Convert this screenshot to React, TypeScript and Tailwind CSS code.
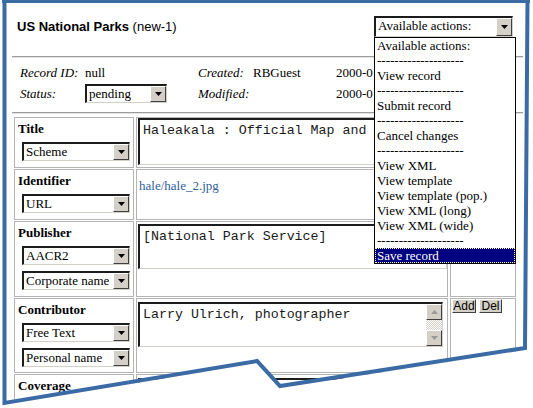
import React from "react"

const serif = "font-['Liberation_Serif','Times_New_Roman',serif]"
const sunken =
  "border-t-2 border-l-2 border-b border-r border-t-[#1c1c1c] border-l-[#1c1c1c] border-b-[#d4d0c8] border-r-[#d4d0c8]"
const raised =
  "border border-t-white border-l-white border-b-[#404040] border-r-[#404040] bg-[#d4d0c8]"

const Tri = ({ up, color = "black" }: { up?: boolean; color?: string }) => (
  <svg width="7" height="4" viewBox="0 0 7 4">
    <path d={up ? "M3.5 0L7 4H0z" : "M0 0h7L3.5 4z"} fill={color} />
  </svg>
)

const Select = ({ label, className = "" }: { label: string; className?: string }) => (
  <div className={`flex h-[19px] items-stretch bg-white ${sunken} ${className}`}>
    <span className={`flex-1 truncate pl-[2px] text-[13px] leading-[15px] text-black ${serif}`}>
      {label}
    </span>
    <span className={`flex w-[16px] items-center justify-center ${raised}`}>
      <Tri />
    </span>
  </div>
)

const TextBox = ({
  text,
  className = "",
  scroll,
}: {
  text: string
  className?: string
  scroll?: boolean
}) => (
  <div className={`flex bg-white ${sunken} ${className}`}>
    <div className="flex-1 overflow-hidden whitespace-pre px-[3px] pt-[3px] font-['Liberation_Mono',monospace] text-[13.3px] leading-[15px] text-[#1a1a1a]">
      {text}
    </div>
    {scroll && (
      <div className="flex w-[16px] flex-col">
        <span className={`flex h-[16px] items-center justify-center ${raised}`}>
          <Tri up color="#9a9a9a" />
        </span>
        <span className="flex-1 bg-[repeating-conic-gradient(#d4d0c8_0_25%,#ffffff_0_50%)] bg-[length:2px_2px]" />
        <span className={`flex h-[16px] items-center justify-center ${raised}`}>
          <Tri color="#9a9a9a" />
        </span>
      </div>
    )}
  </div>
)

const Label = ({ children }: { children: React.ReactNode }) => (
  <div className={`pl-[3px] text-[13px] font-bold leading-[16px] text-black ${serif}`}>{children}</div>
)

const Cell = ({ className = "", children }: { className?: string; children?: React.ReactNode }) => (
  <div className={`border border-[#b4b4b4] ${className}`}>{children}</div>
)

const actions = [
  "Available actions:",
  "--------------------",
  "View record",
  "--------------------",
  "Submit record",
  "--------------------",
  "Cancel changes",
  "--------------------",
  "View XML",
  "View template",
  "View template (pop.)",
  "View XML (long)",
  "View XML (wide)",
  "--------------------",
]

const App = () => {
  return (
    <div className="relative h-[408px] w-[533px] overflow-hidden bg-white">
      <div className="pl-[12px] pr-[10px]">
        <div className="flex h-[56px] items-start justify-between pt-[16px]">
          <div className="mt-[3px] pl-[5px] font-['Liberation_Sans',Arial,sans-serif] text-[13px] leading-[16px] text-black">
            <b>US National Parks</b> (new-1)
          </div>
          <Select label="Available actions:" className="mr-[10px] h-[21px] w-[139px]" />
        </div>
        <div className="h-[2px] border-t border-b border-t-[#9c9c9c] border-b-[#e4e4e4]" />

        <div className={`mt-[4px] pl-[8px] text-[13px] text-black ${serif}`}>
          <div className="flex h-[21px] items-center">
            <span className="w-[65px] italic">Record ID:</span>
            <span className="w-[113px]">null</span>
            <span className="w-[55px] italic">Created:</span>
            <span className="w-[83px]">RBGuest</span>
            <span className="w-[37px] overflow-hidden whitespace-nowrap">2000-05-18</span>
          </div>
          <div className="flex h-[21px] items-center">
            <span className="w-[65px] italic">Status:</span>
            <span className="w-[113px]">
              <Select label="pending" className="w-[82px]" />
            </span>
            <span className="w-[138px] italic">Modified:</span>
            <span className="w-[37px] overflow-hidden whitespace-nowrap">2000-05-18</span>
          </div>
        </div>
        <div className="mt-[8px] h-[2px] border-t border-b border-t-[#9c9c9c] border-b-[#e4e4e4]" />

        <div className="ml-[2px] mt-[3px] flex flex-col gap-[1px]">
          <div className="flex h-[51px] gap-[2px]">
            <Cell className="w-[120px] pt-[3px]">
              <Label>Title</Label>
              <Select label="Scheme" className="ml-[7px] mt-[5px] w-[108px]" />
            </Cell>
            <Cell className="w-[312px] pl-[1px]">
              <TextBox text="Haleakala : Official Map and" className="h-[47px] w-[305px]" />
            </Cell>
            <Cell className="w-[66px]" />
          </div>

          <div className="flex h-[51px] gap-[2px]">
            <Cell className="w-[120px] pt-[3px]">
              <Label>Identifier</Label>
              <Select label="URL" className="ml-[7px] mt-[5px] w-[108px]" />
            </Cell>
            <Cell className="w-[312px] pl-[2px] pt-[2px]">
              <span className={`text-[13px] leading-[15px] text-[#2f5f9e] ${serif}`}>hale/hale_2.jpg</span>
            </Cell>
            <Cell className="w-[66px]" />
          </div>

          <div className="flex h-[76px] gap-[2px]">
            <Cell className="w-[120px] pt-[3px]">
              <Label>Publisher</Label>
              <Select label="AACR2" className="ml-[7px] mt-[5px] w-[108px]" />
              <Select label="Corporate name" className="ml-[7px] mt-[6px] w-[108px]" />
            </Cell>
            <Cell className="w-[312px] pl-[1px] pt-[2px]">
              <TextBox text="[National Park Service]" className="h-[45px] w-[309px]" />
            </Cell>
            <Cell className="w-[66px]" />
          </div>

          <div className="flex h-[75px] gap-[2px]">
            <Cell className="w-[120px] pt-[3px]">
              <Label>Contributor</Label>
              <Select label="Free Text" className="ml-[7px] mt-[5px] w-[108px]" />
              <Select label="Personal name" className="ml-[7px] mt-[6px] w-[108px]" />
            </Cell>
            <Cell className="w-[312px] pl-[1px] pt-[3px]">
              <TextBox text="Larry Ulrich, photographer" className="h-[45px] w-[305px]" scroll />
            </Cell>
            <Cell className="flex w-[66px] items-start gap-[3px] pl-[1px]">
              <button className={`h-[14px] w-[24px] font-['Liberation_Sans',Arial,sans-serif] text-[12px] leading-[12px] text-black ${raised}`}>
                Add
              </button>
              <button className={`h-[14px] w-[23px] font-['Liberation_Sans',Arial,sans-serif] text-[12px] leading-[12px] text-black ${raised}`}>
                Del
              </button>
            </Cell>
          </div>

          <div className="flex h-[50px] gap-[2px]">
            <Cell className="w-[120px] pt-[3px]">
              <Label>Coverage</Label>
            </Cell>
            <Cell className="w-[312px] pl-[1px] pt-[3px]">
              <TextBox text="" className="h-[45px] w-[305px]" />
            </Cell>
            <Cell className="w-[66px]" />
          </div>
        </div>
      </div>

      {/* open dropdown list */}
      <div className={`absolute left-[374px] top-[37px] w-[142px] border border-black bg-white text-[13px] text-black ${serif}`}>
        {actions.map((a, i) => (
          <div key={i} className="h-[15px] overflow-hidden whitespace-nowrap pl-[2px] leading-[15px]">
            {a}
          </div>
        ))}
        <div className="h-[15px] border border-dotted border-[#ffff99] bg-[#000080] pl-[1px] leading-[13px] text-white">
          Save record
        </div>
      </div>

      {/* torn screenshot frame */}
      <svg className="pointer-events-none absolute inset-0" width="533" height="408" viewBox="0 0 533 408">
        <polygon points="0,405 257,363 280,388 526,350 533,350 533,408 0,408" fill="white" />
        <rect x="529" y="0" width="4" height="408" fill="white" />
        <rect x="0" y="0" width="2" height="408" fill="white" />
        <polyline
          points="4.5,1 4.5,403 257,361 280,386 525,348 527.5,1"
          fill="none"
          stroke="#3b6ba5"
          strokeWidth="4"
          strokeLinejoin="miter"
        />
        <line x1="2" y1="1.5" x2="530" y2="1.5" stroke="#3b6ba5" strokeWidth="3" />
      </svg>
    </div>
  )
}

export default App
